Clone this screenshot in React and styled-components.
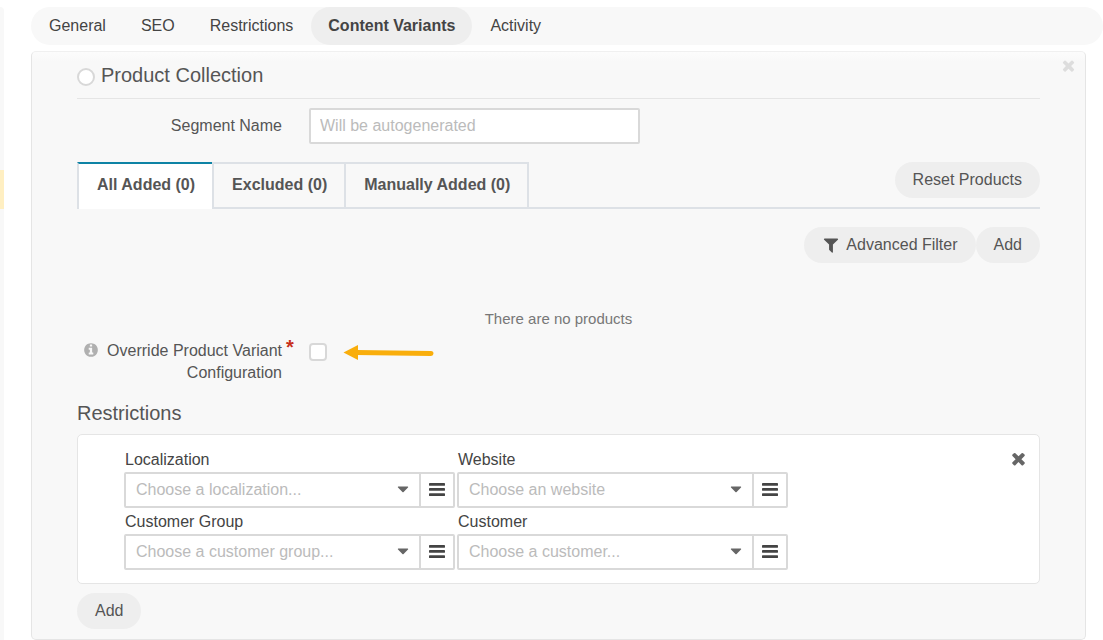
import React from 'react';
import styled, { createGlobalStyle } from 'styled-components';

const GlobalStyle = createGlobalStyle`
  *, *::before, *::after { box-sizing: border-box; }
  body {
    margin: 0;
    background: #fff;
    color: #555;
    font-family: "Liberation Sans", Arial, sans-serif;
    font-size: 16px;
    line-height: 22px;
  }
  button, input, select { font: inherit; color: inherit; margin: 0; }
`;

const Page = styled.div`
  display: flex;
  align-items: stretch;
  min-height: 100vh;
  padding-top: 7px;
`;

const SideRail = styled.aside`
  flex: none;
  width: 4px;
  margin-right: 27px;
  padding-top: 163px;
  border-top-right-radius: 4px;
  background: #f8f8f8;
`;

const RailMarker = styled.div`
  height: 39px;
  background: #ffefc2;
`;

const Main = styled.main`
  flex: 1;
  min-width: 0;
`;

const NavBar = styled.nav`
  display: flex;
  gap: 1px;
  height: 38px;
  padding-left: 1px;
  border-radius: 19px;
  background: #f8f8f8;
`;

const NavLink = styled.a`
  display: flex;
  align-items: center;
  padding: 0 17px;
  border-radius: 19px;
  color: #444;
  text-decoration: none;
  font-weight: ${(p) => (p.$active ? 700 : 400)};
  background: ${(p) => (p.$active ? '#eee' : 'transparent')};
`;

const Panel = styled.section`
  position: relative;
  margin: 6px 17px 0 0;
  padding: 0 45px 10px;
  border: 1px solid #e5e5e5;
  border-top-color: #f0f0f0;
  border-radius: 5px;
  background: linear-gradient(#fcfcfc, #f8f8f8 10px);
`;

const CloseButton = styled.button`
  position: absolute;
  top: ${(p) => p.$top}px;
  right: ${(p) => p.$right}px;
  display: flex;
  padding: 0;
  border: 0;
  background: none;
  color: ${(p) => p.$color};
`;

const PanelHeader = styled.header`
  display: flex;
  align-items: center;
  gap: 6px;
  height: 47px;
  border-bottom: 1px solid #e5e5e5;
`;

const Radio = styled.input`
  appearance: none;
  flex: none;
  && { margin: 4px 0 0; }
  width: 18px;
  height: 18px;
  border: 2px solid #d8d8d8;
  border-radius: 50%;
  background: #fff;
`;

const TitleLabel = styled.label`
  font-size: 20px;
  line-height: 24px;
`;

const FormRow = styled.div`
  display: flex;
  align-items: ${(p) => (p.$top ? 'flex-start' : 'center')};
  margin-top: ${(p) => (p.$top ? 10 : 9)}px;
`;

const LabelCell = styled.div`
  display: flex;
  justify-content: flex-end;
  flex: none;
  width: 205px;
  margin-right: 27px;
  text-align: right;
`;

const HintIcon = styled.span`
  display: flex;
  margin: 2px 8px 0 0;
  color: #b0b0b0;
`;

const RequiredLabel = styled.label`
  position: relative;
`;

const Asterisk = styled.span`
  position: absolute;
  top: -4px;
  left: 100%;
  padding-left: 4px;
  color: #c7301c;
  font-size: 20px;
  font-weight: 700;
`;

const TextInput = styled.input`
  width: 331px;
  height: 36px;
  padding: 0 9px;
  border: 2px solid #d9d9d9;
  border-radius: 2px;
  background: #fff;
  outline: 0;
  &::placeholder { color: #bbb; opacity: 1; }
`;

const TabStrip = styled.div`
  display: flex;
  align-items: flex-start;
  justify-content: space-between;
  height: 47px;
  margin-top: 18px;
  border-bottom: 2px solid #dde1e6;
`;

const TabList = styled.div`
  display: flex;
`;

const Tab = styled.button`
  height: ${(p) => (p.$active ? 47 : 45)}px;
  padding: ${(p) => (p.$active ? '0 17px 4px 18px' : '0 17px 2px 18px')};
  border: 2px solid #dde1e6;
  border-width: 2px 0 0 2px;
  border-top-color: ${(p) => (p.$active ? '#0e83a5' : '#dde1e6')};
  background: ${(p) => (p.$active ? '#fff' : 'transparent')};
  font-weight: 700;
  &:last-child { border-right-width: 2px; }
`;

const PillButton = styled.button`
  display: flex;
  align-items: center;
  gap: 6px;
  height: 36px;
  padding: 0 18px;
  border: 0;
  border-radius: 18px;
  background: #eee;
`;

const Toolbar = styled.div`
  display: flex;
  justify-content: flex-end;
  margin-top: 18px;
`;

const EmptyNote = styled.p`
  margin: 45px 0 0;
  text-align: center;
  font-size: 15px;
  color: #777;
`;

const CheckBox = styled.input`
  appearance: none;
  width: 18px;
  height: 18px;
  && { margin: 3px 16px 0 0; }
  border: 2px solid #d8d8d8;
  border-radius: 4px;
  background: #fff;
`;

const Arrow = styled.svg`
  margin-top: 4px;
`;

const SectionTitle = styled.h2`
  margin: 17px 0 9px;
  font-size: 20px;
  line-height: 24px;
  font-weight: 400;
`;

const Card = styled.div`
  position: relative;
  margin-bottom: 9px;
  padding: 14px 46px 13px;
  border: 1px solid #e5e5e5;
  border-radius: 5px;
  background: #fff;
`;

const FieldGrid = styled.div`
  display: grid;
  grid-template-columns: repeat(2, 331px);
  gap: 3px 2px;
`;

const Field = styled.div`
  display: flex;
  flex-direction: column;
  gap: 1px;
`;

const FieldLabel = styled.label`
  padding-left: 1px;
  color: #444;
`;

const SelectGroup = styled.div`
  position: relative;
  display: flex;
  height: 36px;
  border: 2px solid #d9d9d9;
  border-radius: 2px;
  background: #fff;
`;

const Select = styled.select`
  appearance: none;
  flex: 1;
  min-width: 0;
  padding: 0 30px 0 10px;
  border: 0;
  background: transparent;
  color: #bbb;
  outline: 0;
`;

const Caret = styled.svg`
  position: absolute;
  top: 12px;
  right: 44px;
  pointer-events: none;
`;

const ListButton = styled.button`
  display: flex;
  align-items: center;
  justify-content: center;
  width: 34px;
  padding: 0 0 2px;
  border: 0;
  border-left: 2px solid #d9d9d9;
  background: none;
  color: #444;
`;

function Icon({ size, d }) {
  return (
    <svg width={size} height={size} viewBox="0 0 1792 1792" fill="currentColor" aria-hidden="true">
      <path d={d} />
    </svg>
  );
}

const TIMES =
  'M1490 1322q0 40-28 68l-136 136q-28 28-68 28t-68-28l-294-294-294 294q-28 28-68 28t-68-28l-136-136q-28-28-28-68t28-68l294-294-294-294q-28-28-28-68t28-68l136-136q28-28 68-28t68 28l294 294 294-294q28-28 68-28t68 28l136 136q28 28 28 68t-28 68l-294 294 294 294q28 28 28 68z';
const FILTER =
  'M1595 295q17 41-14 70l-493 493v742q0 42-39 59-13 5-25 5-27 0-45-19l-256-256q-19-19-19-45v-486l-493-493q-31-29-14-70 17-39 59-39h1280q42 0 59 39z';
const INFO =
  'M1152 1376v-160q0-14-9-23t-23-9h-96v-512q0-14-9-23t-23-9h-320q-14 0-23 9t-9 23v160q0 14 9 23t23 9h96v320h-96q-14 0-23 9t-9 23v160q0 14 9 23t23 9h448q14 0 23-9t9-23zm-128-896v-160q0-14-9-23t-23-9h-192q-14 0-23 9t-9 23v160q0 14 9 23t23 9h192q14 0 23-9t9-23zm640 416q0 209-103 385.5t-279.5 279.5-385.5 103-385.5-103-279.5-279.5-103-385.5 103-385.5 279.5-279.5 385.5-103 385.5 103 279.5 279.5 103 385.5z';

const NAV = ['General', 'SEO', 'Restrictions', 'Content Variants', 'Activity'];
const TABS = ['All Added (0)', 'Excluded (0)', 'Manually Added (0)'];
const FIELDS = [
  { id: 'localization', label: 'Localization', placeholder: 'Choose a localization...' },
  { id: 'website', label: 'Website', placeholder: 'Choose an website' },
  { id: 'customer-group', label: 'Customer Group', placeholder: 'Choose a customer group...' },
  { id: 'customer', label: 'Customer', placeholder: 'Choose a customer...' },
];

function EntityField({ id, label, placeholder }) {
  return (
    <Field>
      <FieldLabel htmlFor={id}>{label}</FieldLabel>
      <SelectGroup>
        <Select id={id} defaultValue="">
          <option value="">{placeholder}</option>
        </Select>
        <Caret width="12" height="7" viewBox="0 0 12 7" aria-hidden="true">
          <path d="M1.2 0.5h9.6q.8.4.2 1L6.6 6q-.6.5-1.2 0L1 1.500q-.6-.6.2-1z" fill="#666" />
        </Caret>
        <ListButton type="button" aria-label={`Browse ${label}`}>
          <svg width="16" height="13" viewBox="0 0 16 13" fill="currentColor" aria-hidden="true">
            <rect width="16" height="2.700" rx="0.4" />
            <rect y="5" width="16" height="2.700" rx="0.4" />
            <rect y="10.300" width="16" height="2.700" rx="0.4" />
          </svg>
        </ListButton>
      </SelectGroup>
    </Field>
  );
}

export default function App() {
  return (
    <>
      <GlobalStyle />
      <Page>
        <SideRail>
          <RailMarker />
        </SideRail>
        <Main>
          <NavBar>
            {NAV.map((name) => (
              <NavLink key={name} href="#" $active={name === 'Content Variants'}>
                {name}
              </NavLink>
            ))}
          </NavBar>
          <Panel>
            <CloseButton type="button" aria-label="Remove variant" $top={5} $right={8} $color="#ddd">
              <Icon size={17} d={TIMES} />
            </CloseButton>
            <PanelHeader>
              <Radio type="radio" id="product-collection" name="variant" />
              <TitleLabel htmlFor="product-collection">Product Collection</TitleLabel>
            </PanelHeader>
            <FormRow>
              <LabelCell>
                <label htmlFor="segment-name">Segment Name</label>
              </LabelCell>
              <TextInput id="segment-name" type="text" placeholder="Will be autogenerated" />
            </FormRow>
            <TabStrip>
              <TabList role="tablist">
                {TABS.map((name, i) => (
                  <Tab key={name} type="button" role="tab" aria-selected={i === 0} $active={i === 0}>
                    {name}
                  </Tab>
                ))}
              </TabList>
              <PillButton type="button">Reset Products</PillButton>
            </TabStrip>
            <Toolbar>
              <PillButton type="button">
                <Icon size={18} d={FILTER} />
                Advanced Filter
              </PillButton>
              <PillButton type="button">Add</PillButton>
            </Toolbar>
            <EmptyNote>There are no products</EmptyNote>
            <FormRow $top>
              <LabelCell>
                <HintIcon>
                  <Icon size={16} d={INFO} />
                </HintIcon>
                <RequiredLabel htmlFor="override">
                  Override Product Variant
                  <Asterisk>*</Asterisk>
                  <br />
                  Configuration
                </RequiredLabel>
              </LabelCell>
              <CheckBox id="override" type="checkbox" />
              <Arrow width="92" height="18" viewBox="0 0 92 18" aria-hidden="true">
                <path d="M13 8.500L88 9.500" stroke="#f9ae0c" strokeWidth="5" strokeLinecap="round" />
                <path d="M0.500 8.500L15 1v15z" fill="#f9ae0c" />
              </Arrow>
            </FormRow>
            <SectionTitle>Restrictions</SectionTitle>
            <Card>
              <CloseButton type="button" aria-label="Remove restriction" $top={14} $right={11} $color="#666">
                <Icon size={19} d={TIMES} />
              </CloseButton>
              <FieldGrid>
                {FIELDS.map((field) => (
                  <EntityField key={field.id} {...field} />
                ))}
              </FieldGrid>
            </Card>
            <PillButton type="button">Add</PillButton>
          </Panel>
        </Main>
      </Page>
    </>
  );
}
